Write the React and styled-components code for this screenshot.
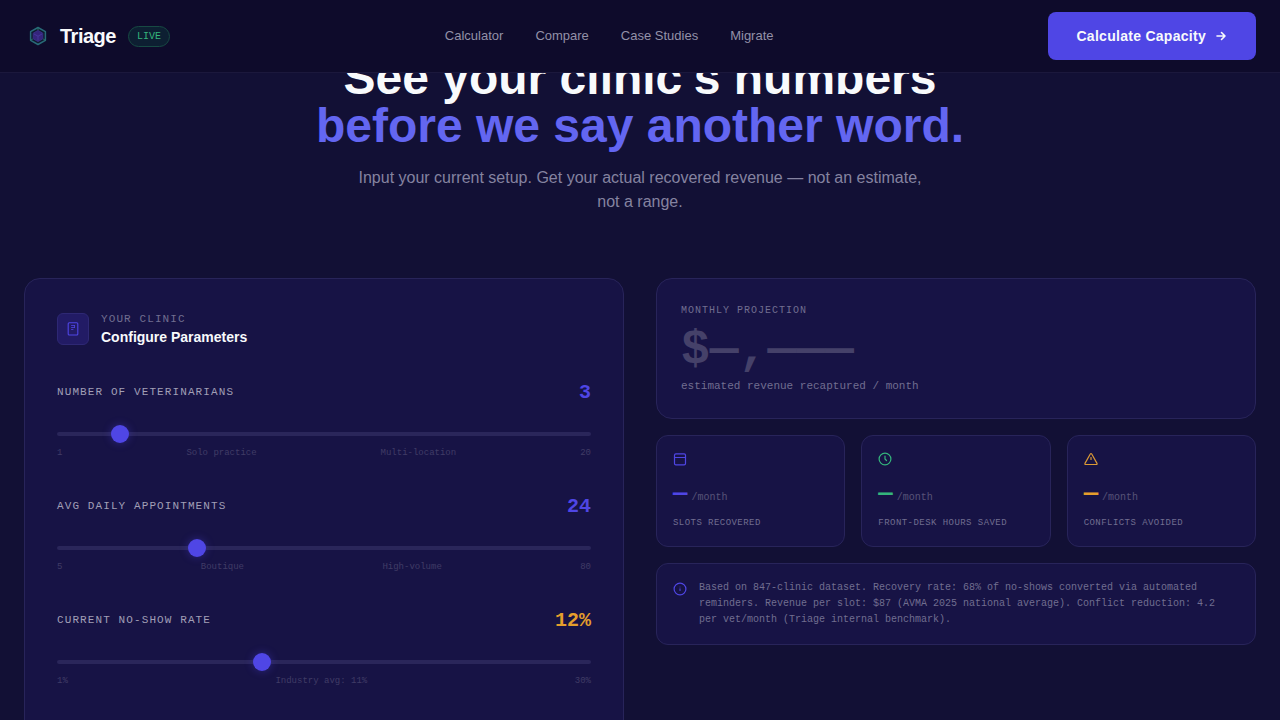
import React, { useState } from 'react';
import styled, { createGlobalStyle } from 'styled-components';

const sans = '"Liberation Sans", Arial, sans-serif';
const mono = '"Liberation Mono", "Courier New", monospace';

const GlobalStyle = createGlobalStyle`
  * {
    box-sizing: border-box;
  }

  html {
    background: #121035;
  }

  body {
    margin: 0;
    overflow-x: hidden;
    background: #121035;
    color: #f8fafc;
    font-family: ${sans};
    scrollbar-width: none;
  }
`;

// --- Icons ---
const LogoIcon = (
  <svg width="28" height="28" viewBox="0 0 28 28" fill="none" aria-hidden="true">
    <path d="M14 5.5L21.4 9.7V18.3L14 22.5L6.6 18.3V9.7Z" fill="#22c55e" fillOpacity="0.08" stroke="#286a78" strokeWidth="1.5" strokeLinejoin="round" />
    <path d="M14 8.5L18.8 11.2V16.8L14 19.5L9.2 16.8V11.2Z" fill="#35247c" stroke="#372e85" />
    <path d="M10 12L14 14.2L18 12M14 14.2V18.5" stroke="#4a3da6" strokeWidth="0.7" />
    <path d="M14 5.5V8M6.6 18.3L8.8 17M21.4 18.3L19.2 17" stroke="#277569" />
  </svg>
);

const ArrowIcon = (
  <svg width="14" height="14" viewBox="0 0 14 14" fill="none" stroke="currentColor" strokeWidth="1.6" strokeLinecap="round" strokeLinejoin="round" aria-hidden="true">
    <path d="M3 7H11M7.5 3.5L11 7L7.5 10.5" />
  </svg>
);

const FormIcon = (
  <svg width="14" height="14" viewBox="0 0 14 14" fill="none" stroke="#4f46e5" strokeWidth="1.1" strokeLinecap="round" strokeLinejoin="round" aria-hidden="true">
    <rect x="2.2" y="0.8" width="9.6" height="12.2" rx="1" />
    <path d="M5.5 3.5H8.5M5.5 5.5H8.5M5.5 7.5H7M8.5 3.5V5.5" strokeWidth="0.8" />
  </svg>
);

const CalendarIcon = (
  <svg width="14" height="14" viewBox="0 0 14 14" fill="none" stroke="#4f46e5" strokeWidth="1.2" strokeLinecap="round" aria-hidden="true">
    <rect x="1.5" y="1.8" width="11" height="11" rx="1.4" />
    <path d="M1.5 5.5H12.5" />
  </svg>
);

const ClockIcon = (
  <svg width="14" height="14" viewBox="0 0 14 14" fill="none" stroke="#34b57c" strokeWidth="1.2" strokeLinecap="round" aria-hidden="true">
    <circle cx="7" cy="7" r="5.9" />
    <path d="M7 4V7L8.5 8.5" />
  </svg>
);

const WarningIcon = (
  <svg width="14" height="14" viewBox="0 0 14 14" fill="none" stroke="#dc9a35" strokeWidth="1.2" strokeLinecap="round" strokeLinejoin="round" aria-hidden="true">
    <path d="M6.3 2Q7 1 7.7 2L13 11.4Q13.4 12.5 12.4 12.5H1.6Q0.6 12.5 1 11.4Z" />
    <path d="M7 5.5V7.4" />
  </svg>
);

const InfoIcon = (
  <svg width="14" height="14" viewBox="0 0 14 14" fill="none" stroke="#4f46e5" strokeWidth="1.2" strokeLinecap="round" aria-hidden="true">
    <circle cx="7" cy="7" r="5.9" />
    <path d="M7 6.8V8.6" strokeWidth="1" />
    <path d="M7 5V5.1" strokeWidth="0.7" />
  </svg>
);

// --- Styled Components ---
const Header = styled.header`
  position: fixed;
  top: 0;
  left: 0;
  right: 0;
  z-index: 10;
  display: flex;
  align-items: center;
  justify-content: space-between;
  padding: 12px 24px;
  background: #0e0b2b;
  border-bottom: 1px solid #1b183c;
`;

const Brand = styled.a`
  display: flex;
  align-items: center;
  gap: 8px;
  color: #f8fafc;
  text-decoration: none;
`;

const BrandName = styled.span`
  font-size: 20px;
  line-height: 28px;
  font-weight: 700;
  letter-spacing: -0.025em;
`;

const LiveBadge = styled.span`
  margin-left: 4px;
  padding: 2px 8px;
  border: 1px solid #174a43;
  border-radius: 12px;
  background: #0d1f32;
  color: #34b57c;
  font-family: ${mono};
  font-size: 10px;
  line-height: 15px;
`;

const Nav = styled.nav`
  display: flex;
  gap: 32px;
`;

const NavLink = styled.a`
  color: #9391a8;
  font-size: 13px;
  line-height: 20px;
  text-decoration: none;

  &:hover {
    color: #f8fafc;
  }
`;

const CtaButton = styled.button`
  display: flex;
  align-items: center;
  gap: 8px;
  height: 48px;
  padding: 0 28px;
  border: none;
  border-radius: 8px;
  background: #4f46e5;
  color: #f8fafc;
  font-family: inherit;
  font-size: 14px;
  font-weight: 700;
  letter-spacing: 0.02em;
  cursor: pointer;
`;

const Page = styled.main`
  padding: 54px 24px 64px;
`;

const Hero = styled.section`
  display: flex;
  flex-direction: column;
  align-items: center;
  gap: 16px;
  margin-bottom: 64px;
  text-align: center;
`;

const Title = styled.h1`
  margin: 0;
  font-size: 48px;
  line-height: 48px;
  font-weight: 700;
`;

const TitleAccent = styled.span`
  display: block;
  color: #6366f1;
`;

const Subtitle = styled.p`
  max-width: 576px;
  margin: 0;
  color: #8583a0;
  font-size: 16px;
  line-height: 24px;
`;

const Columns = styled.div`
  display: grid;
  grid-template-columns: 1fr 1fr;
  gap: 32px;
  align-items: start;
`;

const Panel = styled.section`
  padding: ${({ $pad }) => $pad}px;
  border: 1px solid #28245a;
  border-radius: ${({ $radius }) => $radius || 16}px;
  background: #171345;
`;

const PanelHead = styled.div`
  display: flex;
  align-items: center;
  gap: 12px;
  margin-bottom: 32px;
`;

const IconBox = styled.div`
  display: flex;
  align-items: center;
  justify-content: center;
  width: 32px;
  height: 32px;
  border: 1px solid #2e2874;
  border-radius: 6px;
  background: #221b65;
`;

const Eyebrow = styled.div`
  color: #716e90;
  font-family: ${mono};
  font-size: 11px;
  line-height: 16px;
  letter-spacing: 0.1em;
`;

const PanelTitle = styled.h2`
  margin: 0;
  font-size: 14px;
  line-height: 20px;
  font-weight: 700;
`;

const Fields = styled.div`
  display: flex;
  flex-direction: column;
  gap: 33px;
  padding-bottom: 32px;
`;

const FieldRow = styled.div`
  display: flex;
  align-items: center;
  justify-content: space-between;
  height: 26px;
  margin-bottom: 20px;
`;

const FieldLabel = styled.label`
  color: #a19fb6;
  font-family: ${mono};
  font-size: 11px;
  line-height: 16px;
  letter-spacing: 0.1em;
`;

const FieldValue = styled.output`
  color: ${({ $color }) => $color};
  font-family: ${mono};
  font-size: 20px;
  font-weight: 700;
`;

const Slider = styled.input`
  display: block;
  width: 100%;
  height: 18px;
  margin: 0 0 3px;
  appearance: none;
  background: transparent;
  cursor: pointer;

  &::-webkit-slider-runnable-track {
    height: 4px;
    border-radius: 2px;
    background: #2a265a;
  }

  &::-webkit-slider-thumb {
    appearance: none;
    width: 18px;
    height: 18px;
    margin-top: -7px;
    border-radius: 50%;
    background: #4f46e5;
    box-shadow: 0 0 8px rgba(79, 70, 229, 0.4);
  }
`;

const Ticks = styled.div`
  display: flex;
  justify-content: space-between;
  color: #403c66;
  font-family: ${mono};
  font-size: 9px;
  line-height: 14px;
`;

const Results = styled.div`
  display: flex;
  flex-direction: column;
  gap: 16px;
`;

const ProjectionLabel = styled.div`
  color: #716e90;
  font-family: ${mono};
  font-size: 10px;
  line-height: 15px;
  letter-spacing: 0.1em;
`;

const ProjectionValue = styled.div`
  margin: 8px 0 4px;
  color: #454169;
  font-family: ${mono};
  font-size: 48px;
  line-height: 48px;
  font-weight: 700;
`;

const ProjectionNote = styled.div`
  color: #716e90;
  font-family: ${mono};
  font-size: 11px;
  line-height: 16px;
`;

const Stats = styled.div`
  display: grid;
  grid-template-columns: repeat(3, 1fr);
  gap: 16px;
`;

const StatIcon = styled.div`
  display: flex;
  margin-bottom: 16px;
`;

const StatValue = styled.div`
  display: flex;
  align-items: baseline;
  gap: 4px;
  height: 24px;
  margin-bottom: 10px;
  color: ${({ $color }) => $color};
  font-family: ${mono};
  font-size: 24px;
  line-height: 24px;
  font-weight: 700;
`;

const StatUnit = styled.span`
  color: #575378;
  font-size: 10px;
  font-weight: 400;
`;

const StatLabel = styled.div`
  color: #716e90;
  font-family: ${mono};
  font-size: 9px;
  line-height: 14px;
  letter-spacing: 0.05em;
`;

const InfoRow = styled.div`
  display: flex;
  align-items: flex-start;
  gap: 12px;

  svg {
    flex-shrink: 0;
    margin-top: 2px;
  }
`;

const InfoText = styled.p`
  margin: 0;
  color: #716e90;
  font-family: ${mono};
  font-size: 10px;
  line-height: 16px;
`;

const navLinks = ['Calculator', 'Compare', 'Case Studies', 'Migrate'];

const fields = [
  { key: 'vets', label: 'NUMBER OF VETERINARIANS', min: 1, max: 20, unit: '', color: '#4f46e5', ticks: ['1', 'Solo practice', 'Multi-location', '20'] },
  { key: 'appointments', label: 'AVG DAILY APPOINTMENTS', min: 5, max: 80, unit: '', color: '#4f46e5', ticks: ['5', 'Boutique', 'High-volume', '80'] },
  { key: 'noShow', label: 'CURRENT NO-SHOW RATE', min: 1, max: 30, unit: '%', color: '#e59e2c', ticks: ['1%', 'Industry avg: 11%', '30%'] },
];

const stats = [
  { label: 'SLOTS RECOVERED', icon: CalendarIcon, color: '#4f46e5' },
  { label: 'FRONT-DESK HOURS SAVED', icon: ClockIcon, color: '#34b57c' },
  { label: 'CONFLICTS AVOIDED', icon: WarningIcon, color: '#e59e2c' },
];

// --- Component ---
export default function App() {
  const [values, setValues] = useState({ vets: 3, appointments: 24, noShow: 12 });

  return (
    <>
      <GlobalStyle />
      <Header>
        <Brand href="#">
          {LogoIcon}
          <BrandName>Triage</BrandName>
          <LiveBadge>LIVE</LiveBadge>
        </Brand>
        <Nav>
          {navLinks.map(link => (
            <NavLink key={link} href="#">{link}</NavLink>
          ))}
        </Nav>
        <CtaButton type="button">
          Calculate Capacity
          {ArrowIcon}
        </CtaButton>
      </Header>

      <Page>
        <Hero>
          <Title>
            See your clinic's numbers
            <TitleAccent>before we say another word.</TitleAccent>
          </Title>
          <Subtitle>
            Input your current setup. Get your actual recovered revenue — not an estimate, not a range.
          </Subtitle>
        </Hero>

        <Columns>
          <Panel $pad={32}>
            <PanelHead>
              <IconBox>{FormIcon}</IconBox>
              <div>
                <Eyebrow>YOUR CLINIC</Eyebrow>
                <PanelTitle>Configure Parameters</PanelTitle>
              </div>
            </PanelHead>

            <Fields>
              {fields.map(field => (
                <div key={field.key}>
                  <FieldRow>
                    <FieldLabel htmlFor={field.key}>{field.label}</FieldLabel>
                    <FieldValue htmlFor={field.key} $color={field.color}>
                      {values[field.key]}{field.unit}
                    </FieldValue>
                  </FieldRow>
                  <Slider
                    id={field.key}
                    type="range"
                    min={field.min}
                    max={field.max}
                    value={values[field.key]}
                    onChange={e => setValues({ ...values, [field.key]: Number(e.target.value) })}
                  />
                  <Ticks>
                    {field.ticks.map(tick => <span key={tick}>{tick}</span>)}
                  </Ticks>
                </div>
              ))}
            </Fields>
          </Panel>

          <Results>
            <Panel $pad={24}>
              <ProjectionLabel>MONTHLY PROJECTION</ProjectionLabel>
              <ProjectionValue>$—,———</ProjectionValue>
              <ProjectionNote>estimated revenue recaptured / month</ProjectionNote>
            </Panel>

            <Stats>
              {stats.map(stat => (
                <Panel key={stat.label} $pad={16} $radius={12}>
                  <StatIcon>{stat.icon}</StatIcon>
                  <StatValue $color={stat.color}>
                    —<StatUnit>/month</StatUnit>
                  </StatValue>
                  <StatLabel>{stat.label}</StatLabel>
                </Panel>
              ))}
            </Stats>

            <Panel $pad={16} $radius={12}>
              <InfoRow>
                {InfoIcon}
                <InfoText>
                  Based on 847-clinic dataset. Recovery rate: 68% of no-shows converted via automated
                  reminders. Revenue per slot: $87 (AVMA 2025 national average). Conflict reduction: 4.2
                  per vet/month (Triage internal benchmark).
                </InfoText>
              </InfoRow>
            </Panel>
          </Results>
        </Columns>
      </Page>
    </>
  );
}
